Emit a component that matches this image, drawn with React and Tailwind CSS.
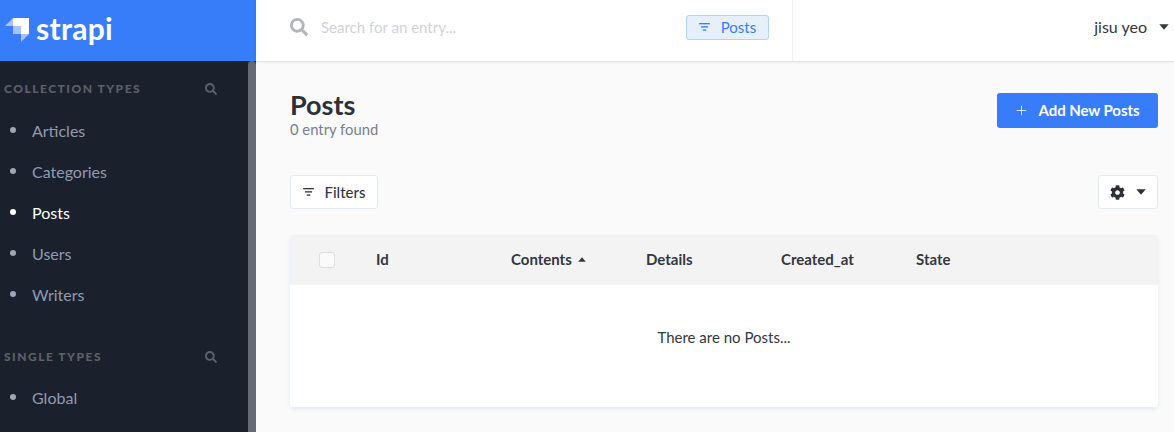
import { Plus } from "lucide-react"
import { FaCog, FaSearch } from "react-icons/fa"

const font = { fontFamily: "Lato, sans-serif" }

function FilterIcon({ className }) {
  return (
    <svg viewBox="0 0 12 9" className={className} fill="currentColor">
      <rect x="0" y="0" width="12" height="1.5" />
      <rect x="2" y="3.6" width="8" height="1.5" />
      <rect x="4" y="7.2" width="4" height="1.5" />
    </svg>
  )
}

function Caret({ className }) {
  return (
    <svg viewBox="0 0 10 6" className={className} fill="currentColor">
      <path d="M0.3 0.3h9.4L5 5.7z" />
    </svg>
  )
}

function Logo() {
  return (
    <svg viewBox="0 0 24 25" className="w-6 h-[25px]">
      <path d="M8 0h16v16h-8V8H8z" fill="#ffffff" />
      <path d="M8 0v8H0z" fill="#ffffff" fillOpacity="0.55" />
      <path d="M8 8h8v8H8z" fill="#ffffff" fillOpacity="0.55" />
      <path d="M16 16h8l-8 8z" fill="#ffffff" fillOpacity="0.55" />
    </svg>
  )
}

function NavSection({ title, items, active, listClass }) {
  return (
    <div>
      <div className="flex items-center justify-between h-[20px] pl-1 pr-[31px]">
        <span className="text-[12px] font-black tracking-[0.125em] text-[#5c6068]">{title}</span>
        <FaSearch size={12} className="text-[#5c6068]" />
      </div>
      <ul className={listClass}>
        {items.map((it) => (
          <li key={it} className="flex items-center h-[41px]">
            <span className={`ml-[10px] w-[6px] h-[6px] rounded-full -translate-y-[1px] ${it === active ? "bg-white" : "bg-[#9ea7b8]"}`} />
            <span className={`ml-4 text-[16px] ${it === active ? "text-white" : "text-[#919bae]"}`}>{it}</span>
          </li>
        ))}
      </ul>
    </div>
  )
}

export default function App() {
  const columns = ["Id", "Contents", "Details", "Created_at", "State"]

  return (
    <div style={font} className="flex w-[1174px] h-[432px] overflow-hidden bg-[#fafafb] text-[#333740]">
      {/* Sidebar */}
      <aside className="w-[256px] shrink-0 flex flex-col">
        <div className="h-[61px] bg-[#377dfa] flex items-center pl-[5px] gap-[7px]">
          <Logo />
          <span className="text-white text-[30px] font-bold tracking-[0.01em] leading-none -mt-[5px]">strapi</span>
        </div>
        <div className="flex-1 flex bg-[#1b202d] overflow-hidden">
          <div className="flex-1 pt-[18px] flex flex-col gap-[32px]">
            <NavSection title="COLLECTION TYPES" items={["Articles", "Categories", "Posts", "Users", "Writers"]} active="Posts" listClass="mt-[11px]" />
            <NavSection title="SINGLE TYPES" items={["Global"]} listClass="mt-[10px]" />
          </div>
          <div className="w-2 bg-[#666a74] rounded-t-sm" />
        </div>
      </aside>

      <div className="flex-1 flex flex-col min-w-0">
        {/* Top bar */}
        <header className="h-[62px] shrink-0 bg-white border-b border-[#e3e4e6] shadow-[0_1px_2px_rgba(0,0,0,0.05)] flex">
          <div className="w-[537px] border-r border-[#f0f1f3] flex items-center pb-[7px] pl-[34px] pr-[23px]">
            <FaSearch size={18} className="text-[#b3b5b9]" />
            <span className="ml-[13px] text-[15px] text-[#d0d2d8]">Search for an entry...</span>
            <div className="ml-auto w-[83px] h-[25px] rounded-[3px] border border-[#aed4fb] bg-[#e6f0fd] text-[#377dfa] flex items-center justify-center gap-[11px] text-[15px]">
              <FilterIcon className="w-[11px] h-[8px]" />
              <span>Posts</span>
            </div>
          </div>
          <div className="flex-1 flex items-center justify-end pb-[7px] pr-[5px]">
            <span className="text-[16px] text-[#333740]">jisu yeo</span>
            <Caret className="ml-[12px] w-[10px] h-[6px] text-[#333740]" />
          </div>
        </header>

        {/* Content */}
        <main className="flex-1 px-[34px] pr-[16px] pt-[27px] min-h-0">
          <div className="flex items-start justify-between">
            <div>
              <h1 className="text-[27px] font-bold leading-[32px] text-[#2c3138]">Posts</h1>
              <p className="text-[14.8px] leading-[17px] text-[#787e8f]">0 entry found</p>
            </div>
            <button className="mt-[4px] w-[161px] h-[35px] pr-[2px] rounded-[3px] bg-[#377dfa] text-white text-[15px] font-bold tracking-[-0.005em] flex items-center justify-center gap-[10px]">
              <Plus size={15} strokeWidth={1.25} />
              <span>Add New Posts</span>
            </button>
          </div>

          <div className="flex items-center justify-between mt-[37px]">
            <button className="w-[88px] h-[34px] rounded-[3px] bg-white border border-[#e3e9f3] text-[15px] font-medium text-[#333740] flex items-center justify-center gap-[11px]">
              <FilterIcon className="w-[11px] h-[8px]" />
              <span>Filters</span>
            </button>
            <button className="w-[60px] h-[34px] rounded-[3px] bg-white border border-[#e3e9f3] text-[#2c3138] flex items-center justify-center gap-[11px]">
              <FaCog size={15} />
              <Caret className="w-[10px] h-[6px]" />
            </button>
          </div>

          <div className="mt-[26px] h-[172px] bg-white rounded-[2px] shadow-[0_2px_4px_#e3e9f3]">
            <div className="h-[50px] pb-[2px] bg-[#f3f3f4] flex items-center text-[15px] font-bold text-[#333740]">
              <div className="w-[86px] pl-[29px] pt-[2px]">
                <div className="w-4 h-4 rounded-[3px] bg-[#fafafb] border border-[#dcdde0]" />
              </div>
              {columns.map((c) => (
                <div key={c} className="w-[135px] flex items-center gap-[6px]">
                  <span>{c}</span>
                  {c === "Contents" && <Caret className="w-2 h-[5px] rotate-180" />}
                </div>
              ))}
            </div>
            <div className="flex justify-center pt-[41px] text-[15px] text-[#333740]">There are no Posts...</div>
          </div>
        </main>
      </div>
    </div>
  )
}
